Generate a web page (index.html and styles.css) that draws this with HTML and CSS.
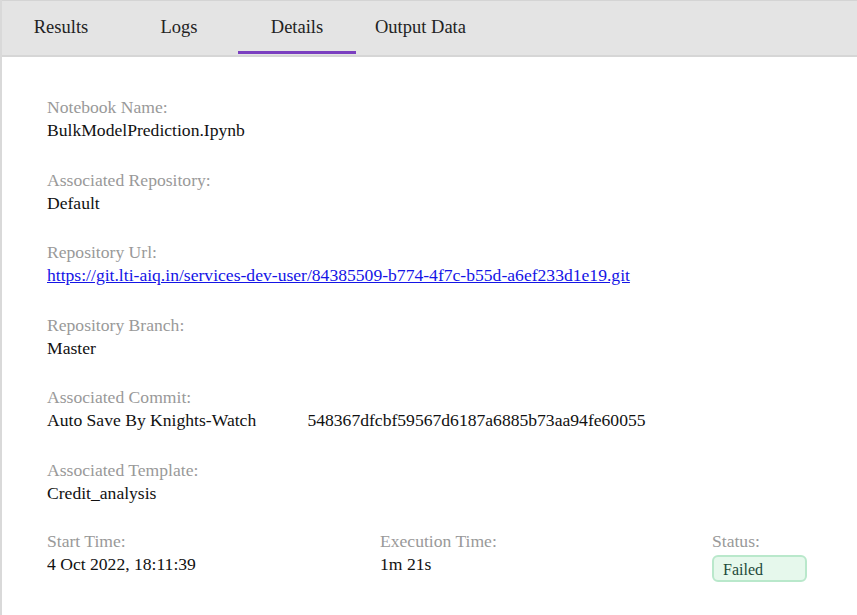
FILE: index.html
```html
<!DOCTYPE html>
<html lang="en">

<head>
    <meta charset="UTF-8">
    <meta name="viewport" content="width=device-width, initial-scale=1.0">
    <title>Run Details</title>
    <link rel="stylesheet" href="styles.css">
</head>

<body>
    <section class="panel">
        <nav class="tabs">
            <span class="tab">Results</span>
            <span class="tab">Logs</span>
            <span class="tab active">Details</span>
            <span class="tab">Output Data</span>
        </nav>

        <div class="details">
            <div class="field">
                <div class="label">Notebook Name:</div>
                <div class="value">BulkModelPrediction.Ipynb</div>
            </div>
            <div class="field">
                <div class="label">Associated Repository:</div>
                <div class="value">Default</div>
            </div>
            <div class="field">
                <div class="label">Repository Url:</div>
                <div class="value"><a href="#">https://git.lti-aiq.in/services-dev-user/84385509-b774-4f7c-b55d-a6ef233d1e19.git</a></div>
            </div>
            <div class="field">
                <div class="label">Repository Branch:</div>
                <div class="value">Master</div>
            </div>
            <div class="field">
                <div class="label">Associated Commit:</div>
                <div class="value commit">
                    <span class="commit_msg">Auto Save By Knights-Watch</span>
                    <span>548367dfcbf59567d6187a6885b73aa94fe60055</span>
                </div>
            </div>
            <div class="field">
                <div class="label">Associated Template:</div>
                <div class="value">Credit_analysis</div>
            </div>

            <div class="row">
                <div class="field">
                    <div class="label">Start Time:</div>
                    <div class="value">4 Oct 2022, 18:11:39</div>
                </div>
                <div class="field">
                    <div class="label">Execution Time:</div>
                    <div class="value">1m 21s</div>
                </div>
                <div class="field">
                    <div class="label">Status:</div>
                    <div class="value"><span class="badge">Failed</span></div>
                </div>
            </div>
        </div>
    </section>
</body>

</html>
```

FILE: styles.css
```css
body {
    margin: 0;
    font-family: "Liberation Serif", "Times New Roman", serif;
    font-size: 17.6px;
    color: #111;
    background: #fff;
}

.panel {
    width: 100%;
    min-height: 615px;
    border-left: 2px solid #d9d9d9;
    box-sizing: border-box;
}

.tabs {
    display: flex;
    height: 57px;
    background: #e4e4e4;
    border-top: 1px solid #d4d4d4;
    border-bottom: 2px solid #d6d6d6;
    box-sizing: border-box;
}

.tab {
    min-width: 118px;
    padding: 2px 19px 0;
    box-sizing: border-box;
    display: flex;
    align-items: center;
    justify-content: center;
    font-size: 18.5px;
    color: #222;
    border-bottom: 3px solid transparent;
    margin-bottom: 1px;
}

.tab.active {
    border-bottom-color: #7b3fc0;
}

.details {
    padding: 39px 0 0 45px;
}

.field {
    margin-bottom: 26.6px;
}

.label {
    color: #999;
    line-height: 23px;
}

.value {
    line-height: 23px;
}

.value a {
    color: #1414e6;
}

.commit_msg {
    display: inline-block;
    width: 256px;
}

.row {
    display: grid;
    grid-template-columns: 333px 332px auto;
    margin-top: -2px;
}

.badge {
    display: inline-block;
    width: 95px;
    height: 27px;
    line-height: 25px;
    margin-top: 2px;
    padding: 0 9px;
    box-sizing: border-box;
    background: #e6f8ec;
    border: 2px solid #b9e8cb;
    border-radius: 6px;
    font-size: 16px;
    color: #1e4a3a;
}
```
